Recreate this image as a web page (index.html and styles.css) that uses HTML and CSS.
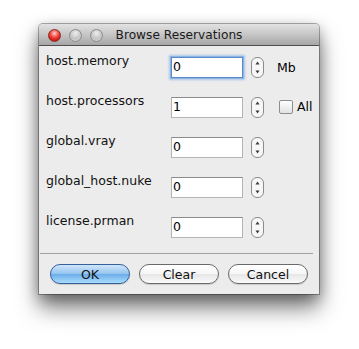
FILE: index.html
```html
<!DOCTYPE html>
<html>
<head>
    <title>Browse Reservations</title>
    <link rel="stylesheet" href="styles.css">
</head>
<body>
    <div class="window">
        <div class="titlebar">
            <div class="lights">
                <span class="light close"></span>
                <span class="light"></span>
                <span class="light"></span>
            </div>
            <div class="title">Browse Reservations</div>
        </div>
        <div class="content">
            <div class="fields">
                <div class="row">
                    <label class="name">host.memory</label>
                    <input type="text" class="num focused" value="0">
                    <span class="stepper"><svg width="13" height="21" viewBox="0 0 13 21"><rect x="0.5" y="0.5" width="12" height="20" rx="5.5" fill="#f7f7f7" stroke="#8c8c8c"/><path d="M4.5 7.5 L6.5 4.5 L8.5 7.5 Z" fill="#3a3a3a"/><path d="M4.5 13.5 L6.5 16.5 L8.5 13.5 Z" fill="#3a3a3a"/></svg></span>
                    <span class="unit">Mb</span>
                </div>
                <div class="row">
                    <label class="name">host.processors</label>
                    <input type="text" class="num" value="1">
                    <span class="stepper"><svg width="13" height="21" viewBox="0 0 13 21"><rect x="0.5" y="0.5" width="12" height="20" rx="5.5" fill="#f7f7f7" stroke="#8c8c8c"/><path d="M4.5 7.5 L6.5 4.5 L8.5 7.5 Z" fill="#3a3a3a"/><path d="M4.5 13.5 L6.5 16.5 L8.5 13.5 Z" fill="#3a3a3a"/></svg></span>
                    <label class="check"><input type="checkbox" class="box"> All</label>
                </div>
                <div class="row">
                    <label class="name">global.vray</label>
                    <input type="text" class="num" value="0">
                    <span class="stepper"><svg width="13" height="21" viewBox="0 0 13 21"><rect x="0.5" y="0.5" width="12" height="20" rx="5.5" fill="#f7f7f7" stroke="#8c8c8c"/><path d="M4.5 7.5 L6.5 4.5 L8.5 7.5 Z" fill="#3a3a3a"/><path d="M4.5 13.5 L6.5 16.5 L8.5 13.5 Z" fill="#3a3a3a"/></svg></span>
                </div>
                <div class="row">
                    <label class="name">global_host.nuke</label>
                    <input type="text" class="num" value="0">
                    <span class="stepper"><svg width="13" height="21" viewBox="0 0 13 21"><rect x="0.5" y="0.5" width="12" height="20" rx="5.5" fill="#f7f7f7" stroke="#8c8c8c"/><path d="M4.5 7.5 L6.5 4.5 L8.5 7.5 Z" fill="#3a3a3a"/><path d="M4.5 13.5 L6.5 16.5 L8.5 13.5 Z" fill="#3a3a3a"/></svg></span>
                </div>
                <div class="row">
                    <label class="name">license.prman</label>
                    <input type="text" class="num" value="0">
                    <span class="stepper"><svg width="13" height="21" viewBox="0 0 13 21"><rect x="0.5" y="0.5" width="12" height="20" rx="5.5" fill="#f7f7f7" stroke="#8c8c8c"/><path d="M4.5 7.5 L6.5 4.5 L8.5 7.5 Z" fill="#3a3a3a"/><path d="M4.5 13.5 L6.5 16.5 L8.5 13.5 Z" fill="#3a3a3a"/></svg></span>
                </div>
            </div>
            <div class="separator"></div>
            <div class="buttons">
                <button type="button" class="btn default">OK</button>
                <button type="button" class="btn">Clear</button>
                <button type="button" class="btn">Cancel</button>
            </div>
        </div>
    </div>
</body>
</html>
```

FILE: styles.css
```css
body { margin: 0; padding: 24px 0 55px 39px; background: #ffffff; font-family: "DejaVu Sans", sans-serif; color: #000; }
.window { width: 280px; height: 270px; background: #ececec; border-radius: 4px 4px 0 0; box-shadow: 0 0 0 1px rgba(0,0,0,0.3), 0 14px 22px rgba(0,0,0,0.5), 0 4px 14px rgba(0,0,0,0.3); }
.titlebar { height: 21px; display: grid; grid-template-columns: 1fr auto 1fr; align-items: center; background: linear-gradient(#e2e2e2, #c6c6c6 50%, #a6a6a6); border-bottom: 1px solid #4f4f4f; border-radius: 4px 4px 0 0; }
.lights { display: flex; gap: 8px; padding-left: 9px; padding-top: 1px; }
.light { width: 13px; height: 13px; border-radius: 50%; box-sizing: border-box; border: 1px solid #8a8a8a; background: radial-gradient(circle at 50% 30%, #eeeeee, #c4c4c4 55%, #d6d6d6); }
.light.close { border-color: #8a2a24; background: radial-gradient(circle at 50% 30%, #ffd2cc, #f0443a 45%, #c91812 75%, #ff6a5e); }
.title { font-size: 12.2px; color: #1a1a1a; padding-top: 1px; }
.content { padding: 11px 0 0 7px; }
.fields { display: flex; flex-direction: column; gap: 19px; }
.row { display: grid; grid-template-columns: 125px 80px 26px auto; height: 21px; align-items: start; }
.name { font-size: 12.5px; line-height: 14px; margin-top: -3px; color: #111; }
.num { width: 72px; height: 21px; box-sizing: border-box; margin: 0; padding: 0 2px 3px 1px; font-family: "DejaVu Sans", sans-serif; font-size: 12.5px; color: #000; background: #fff; border: 1px solid #b4b4b4; border-top-color: #8a8a8a; outline: none; }
.num.focused { border-color: #5a8ccb; box-shadow: 0 0 0 1px #8db3e2, 0 0 2px 2px #a9c6ea; }
.stepper { height: 21px; display: block; }
.stepper svg { display: block; }
.unit { font-size: 12.5px; line-height: 21px; }
.check { display: flex; align-items: center; gap: 4px; font-size: 12.5px; margin-left: 2px; margin-top: 3px; line-height: 14px; }
.box { appearance: none; margin: 0; width: 14px; height: 14px; border: 1px solid #8d8d8d; border-radius: 2px; background: linear-gradient(#ffffff, #f0f0f0 50%, #e2e2e2); }
.separator { height: 1px; background: #a2a2a2; margin: 15px 6px 0 -6px; }
.buttons { display: flex; gap: 9px; padding: 10px 0 0 4px; }
.btn { width: 80px; height: 20px; margin: 0; padding: 0; border-radius: 10px; border: 1px solid #6a6a6a; font-family: "DejaVu Sans", sans-serif; font-size: 12.5px; color: #111; background: linear-gradient(#ffffff, #f6f6f6 50%, #e6e6e6 52%, #fbfbfb); box-shadow: 0 1px 1px rgba(0,0,0,0.15); }
.btn.default { border-color: #34609c; background: linear-gradient(#cfe5fb, #94c4f0 50%, #6caee9 52%, #aadcfd); }
```
